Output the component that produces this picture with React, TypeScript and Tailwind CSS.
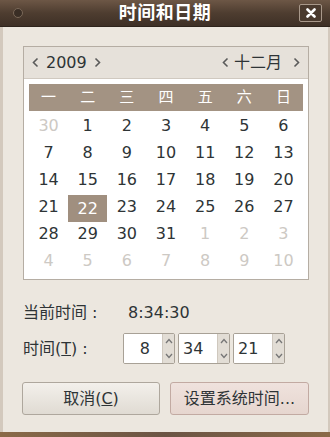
import React from "react";

const FONT = { fontFamily: '"DejaVu Sans", "Noto Sans CJK SC", sans-serif' };

function Chev({ dir }: { dir: "l" | "r" }) {
  return (
    <svg width="7" height="11" viewBox="0 0 7 11" className="shrink-0">
      <polyline
        points={dir === "l" ? "5.5,1.5 1.5,5.5 5.5,9.5" : "1.5,1.5 5.5,5.5 1.5,9.5"}
        fill="none"
        stroke="#5a5a5a"
        strokeWidth="1.6"
      />
    </svg>
  );
}

function Spin({ value, align }: { value: string; align: "l" | "r" }) {
  return (
    <div className="flex h-[31px] border border-[#a8a196] rounded-[2px] bg-white overflow-hidden">
      <div
        className={
          "w-[38px] flex items-center text-[16px] text-[#2e3436] bg-white " +
          (align === "r" ? "justify-end pr-[12px]" : "justify-start pl-[4px]")
        }
      >
        {value}
      </div>
      <div className="w-[12px] flex flex-col items-center justify-between py-[4px] bg-[#e2ddd5] border-l border-[#cfc8be]">
        <svg width="8" height="6" viewBox="0 0 8 6">
          <polyline points="1,5 4,1.5 7,5" fill="none" stroke="#777" strokeWidth="1.3" />
        </svg>
        <svg width="8" height="6" viewBox="0 0 8 6">
          <polyline points="1,1 4,4.5 7,1" fill="none" stroke="#777" strokeWidth="1.3" />
        </svg>
      </div>
    </div>
  );
}

export default function App() {
  const weekdays = ["一", "二", "三", "四", "五", "六", "日"];
  const days: { n: number; out: boolean }[] = [];
  days.push({ n: 30, out: true });
  for (let i = 1; i <= 31; i++) days.push({ n: i, out: false });
  for (let i = 1; i <= 10; i++) days.push({ n: i, out: true });

  return (
    <div className="w-[330px] h-[437px] flex flex-col bg-[#ece7df] overflow-hidden" style={FONT}>
      {/* Title bar */}
      <div className="relative h-[27px] shrink-0 flex items-center justify-center bg-gradient-to-b from-[#6d5746] via-[#4e3d30] to-[#3e3026] border-b border-[#2e241c]">
        <div className="absolute left-[13px] top-[8px] w-[10px] h-[10px] rounded-full bg-[#3a2e25] border border-[#7a6858]" />
        <span className="text-white font-bold text-[18px] leading-none tracking-[0.5px]">时间和日期</span>
        <div className="absolute right-[8px] top-[4px] w-[23px] h-[18px] border border-[#a8988a] rounded-[2px] bg-[#4a3a2e] flex items-center justify-center">
          <svg width="10" height="10" viewBox="0 0 10 10">
            <path d="M1.5 1.5 L8.5 8.5 M8.5 1.5 L1.5 8.5" stroke="#fff" strokeWidth="2.6" strokeLinecap="round" />
          </svg>
        </div>
      </div>

      {/* Body */}
      <div className="flex-1 flex flex-col border-l-[3px] border-r-[2px] border-[#d3c9bd] pl-[20px] pr-[19px] pt-[19px]">
        {/* Calendar */}
        <div className="border border-[#b5ada3] bg-white flex flex-col">
          <div className="h-[32px] bg-[#e6e1da] border-b border-[#d0c9c0] flex items-center justify-between pl-[8px] pr-[8px]">
            <div className="flex items-center gap-[7px]">
              <Chev dir="l" />
              <span className="text-[16px] text-[#2e3436] leading-none">2009</span>
              <Chev dir="r" />
            </div>
            <div className="flex items-center">
              <Chev dir="l" />
              <span className="ml-[5px] text-[16px] text-[#2e3436] leading-none">十二月</span>
              <span className="ml-[11px] flex">
                <Chev dir="r" />
              </span>
            </div>
          </div>
          <div className="px-[5px] pt-[5px] pb-[3px]">
            <div className="h-[27px] bg-[#a39383] grid grid-cols-7 items-center text-white text-[15px]">
              {weekdays.map((w) => (
                <div key={w} className="text-center leading-none">{w}</div>
              ))}
            </div>
            <div className="grid grid-cols-7 mt-[3px]">
              {days.map((d, i) => {
                const sel = !d.out && d.n === 22;
                return (
                  <div
                    key={i}
                    className={
                      "h-[27px] flex items-center justify-center text-[16px] leading-none " +
                      (sel
                        ? "bg-[#a08f7f] text-white"
                        : d.out
                        ? "text-[#cdc9c4]"
                        : "text-[#2e3436]")
                    }
                  >
                    <span className={sel ? "" : "-mt-[3px]"}>{d.n}</span>
                  </div>
                );
              })}
            </div>
          </div>
        </div>

        {/* Current time */}
        <div className="mt-[23px] flex items-center h-[20px] text-[16px] text-[#2e3436]">
          <span className="w-[105px]">当前时间 :</span>
          <span>8:34:30</span>
        </div>

        {/* Time spin */}
        <div className="mt-[10px] flex items-center">
          <span className="w-[100px] text-[16px] text-[#2e3436]">
            时间(<span className="underline">T</span>) :
          </span>
          <div className="flex gap-[3px]">
            <Spin value="8" align="r" />
            <Spin value="34" align="l" />
            <Spin value="21" align="l" />
          </div>
        </div>

        {/* Buttons */}
        <div className="mt-[18px] flex gap-[10px] -ml-[1px]">
          <button className="w-[139px] h-[33px] border border-[#aea79d] rounded-[3px] bg-gradient-to-b from-[#f3f0eb] to-[#e0dbd3] text-[16px] text-[#2e3436]">
            取消(<span className="underline">C</span>)
          </button>
          <button className="w-[140px] h-[33px] border border-[#c2aaa2] rounded-[3px] bg-gradient-to-b from-[#efe2dd] to-[#e6d6cf] text-[16px] text-[#2e3436]">
            设置系统时间...
          </button>
        </div>
      </div>

      {/* Bottom border */}
      <div className="h-[5px] shrink-0 bg-gradient-to-r from-[#8a6a48] via-[#6b5444] to-[#8a6a48]" />
    </div>
  );
}
